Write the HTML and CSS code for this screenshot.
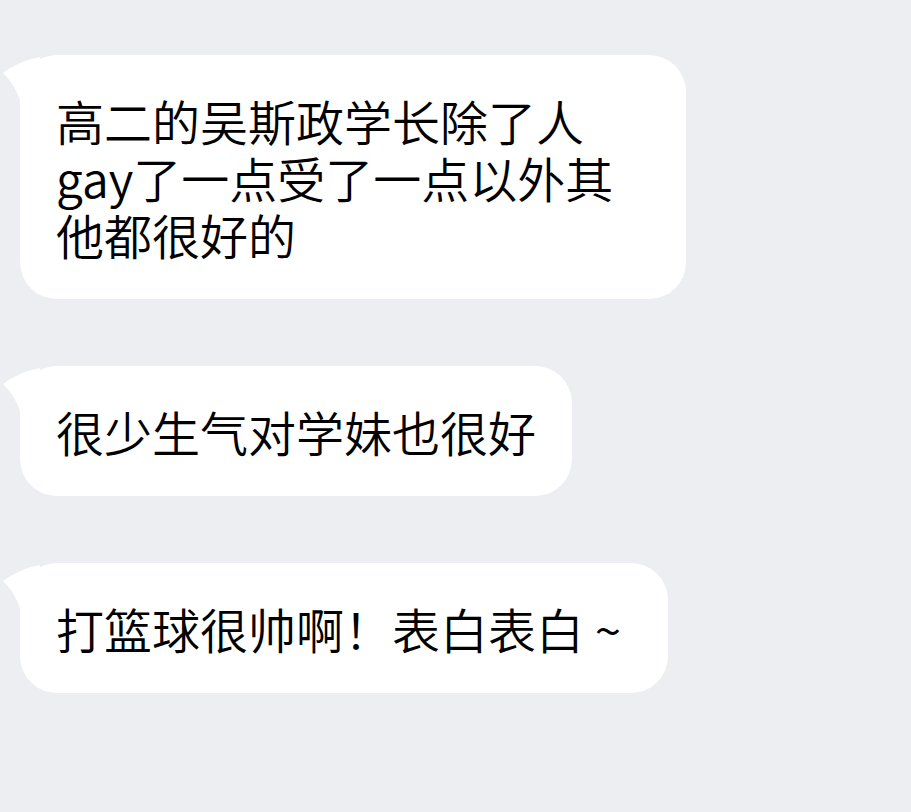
FILE: index.html
```html
<!DOCTYPE html>
<html lang="zh-CN">
<head>
<meta charset="utf-8">
<link rel="stylesheet" href="styles.css">
</head>
<body>
<div class="chat">
  <div class="bubble">
    <svg class="tail" width="40" height="50" viewBox="0 0 40 50"><path d="M37 2 Q 16 6 0 18 Q 11 28 17 45 L 37 45 Z" fill="#fff"/></svg>
    <p class="text wide">高二的吴斯政学长除了人gay了一点受了一点以外其他都很好的</p>
  </div>
  <div class="bubble">
    <svg class="tail" width="40" height="50" viewBox="0 0 40 50"><path d="M37 2 Q 16 6 0 18 Q 11 28 17 45 L 37 45 Z" fill="#fff"/></svg>
    <p class="text">很少生气对学妹也很好</p>
  </div>
  <div class="bubble bubble-extra">
    <svg class="tail" width="40" height="50" viewBox="0 0 40 50"><path d="M37 2 Q 16 6 0 18 Q 11 28 17 45 L 37 45 Z" fill="#fff"/></svg>
    <p class="text">打篮球很帅啊！表白表白 ~</p>
  </div>
</div>
</body>
</html>
```
FILE: styles.css
```css
html, body {
  margin: 0;
  padding: 0;
  background: #eceef1;
}
.chat {
  display: flex;
  flex-direction: column;
  align-items: flex-start;
  gap: 67px;
  padding: 55px 0 0 20px;
}
.bubble {
  position: relative;
  background: #fff;
  border-radius: 37px;
  padding: 37px 36px 36px 36px;
}
.bubble-extra {
  padding-right: 47px;
}
.tail {
  position: absolute;
  left: -17px;
  top: 0;
  display: block;
}
.text {
  margin: 0;
  font-family: "Noto Sans CJK SC", "Noto Sans", sans-serif;
  font-weight: 350;
  font-size: 48px;
  line-height: 57px;
  color: #000;
}
.wide {
  width: 594px;
}
```
